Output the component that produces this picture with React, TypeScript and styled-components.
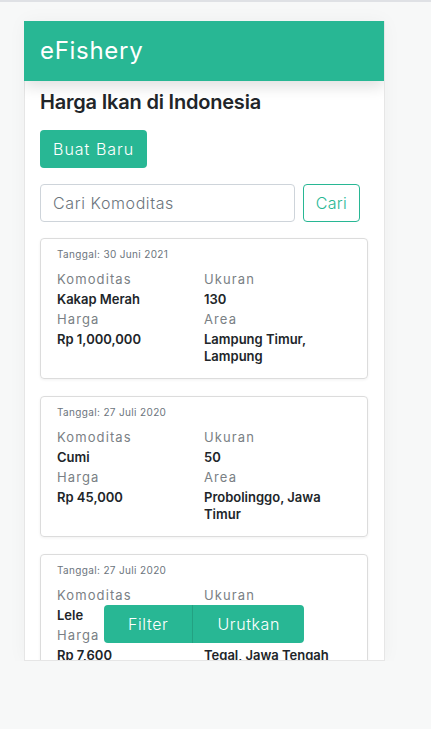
import React from "react";
import styled, { createGlobalStyle } from "styled-components";

const GREEN = "#28b794";

const Global = createGlobalStyle`
  * { box-sizing: border-box; }
  body {
    margin: 0;
    background: #f7f8f8;
    font-family: "Inter", "Open Sans", sans-serif;
    color: #212529;
  }
`;

const TopStrip = styled.div`
  height: 2px;
  background: #dfe1e5;
`;

const Page = styled.div`
  padding: 19px 24px 0;
`;

const Shell = styled.div`
  position: relative;
  width: 361px;
  height: 640px;
  background: #fff;
  border-right: 1px solid #e6e6e6;
  border-bottom: 1px solid #e6e6e6;
  overflow: hidden;
  box-shadow: 0 0 18px rgba(0, 0, 0, 0.04);
`;

const Header = styled.header`
  height: 60px;
  background: ${GREEN};
  display: flex;
  align-items: center;
  padding: 0 16px;
  box-shadow: 0 6px 14px rgba(0, 0, 0, 0.12);
  position: relative;
  z-index: 1;
`;

const Brand = styled.h1`
  margin: 0;
  font-size: 24px;
  font-weight: 400;
  letter-spacing: 0.7px;
  color: #fff;
  line-height: 1;
`;

const Content = styled.main`
  padding: 9px 16px 0 15px;
  display: flex;
  flex-direction: column;
  gap: 16px;
  border-left: 1px solid #e6e6e6;
`;

const Title = styled.h2`
  margin: 0;
  font-size: 20px;
  line-height: 24px;
  font-weight: 600;
  letter-spacing: -0.2px;
  color: #212529;
`;

const PrimaryButton = styled.button`
  align-self: flex-start;
  height: 38px;
  padding: 0 13px;
  border: none;
  border-radius: 4px;
  background: ${GREEN};
  color: #fff;
  font-family: inherit;
  font-size: 16px;
  font-weight: 300;
  letter-spacing: 1px;
`;

const SearchRow = styled.form`
  display: flex;
  gap: 8px;
  padding-right: 8px;
`;

const SearchInput = styled.input`
  flex: 1;
  min-width: 0;
  height: 38px;
  padding: 0 12px;
  border: 1px solid #ced4da;
  border-radius: 4px;
  font-family: inherit;
  font-size: 16px;
  font-weight: 300;
  letter-spacing: 0.6px;
  color: #495057;
  &::placeholder { color: #6c757d; }
`;

const OutlineButton = styled.button`
  height: 38px;
  padding: 0 12px;
  background: #fff;
  border: 1px solid ${GREEN};
  border-radius: 4px;
  color: ${GREEN};
  font-family: inherit;
  font-size: 16px;
  font-weight: 300;
  letter-spacing: 0.3px;
`;

const CardList = styled.section`
  display: flex;
  flex-direction: column;
  gap: 17px;
`;

const Card = styled.article`
  border: 1px solid #dcdcdc;
  border-radius: 4px;
  padding: 8px 16px 12px;
  box-shadow: 0 1px 3px rgba(0, 0, 0, 0.06);
`;

const DateLine = styled.div`
  font-size: 10px;
  line-height: 15px;
  color: #6c757d;
  letter-spacing: 0.35px;
  margin-bottom: 7px;
`;

const Grid = styled.div`
  display: grid;
  grid-template-columns: 1fr 1fr;
`;

const Field = styled.div`
  display: flex;
  flex-direction: column;
`;

const Label = styled.span`
  font-size: 13px;
  line-height: 20px;
  color: #7a7f85;
  letter-spacing: 1.1px;
`;

const Value = styled.span`
  font-size: 13px;
  line-height: 17px;
  padding: 2px 0 1px;
  font-weight: 600;
  color: #212529;
`;

const FloatGroup = styled.div`
  position: absolute;
  left: 50%;
  bottom: 17px;
  transform: translateX(-50%);
  display: flex;
  border-radius: 4px;
  overflow: hidden;
  z-index: 2;
`;

const GroupButton = styled.button<{ $first?: boolean }>`
  height: 38px;
  padding: 0 24px;
  border: none;
  border-left: ${(p) => (p.$first ? "none" : "1px solid rgba(0,0,0,0.12)")};
  background: ${GREEN};
  color: #fff;
  font-family: inherit;
  font-size: 16px;
  font-weight: 300;
  letter-spacing: 0.6px;
`;

type Item = {
  date: string;
  komoditas: string;
  ukuran: string;
  harga: string;
  area: string;
};

const items: Item[] = [
  { date: "30 Juni 2021", komoditas: "Kakap Merah", ukuran: "130", harga: "Rp 1,000,000", area: "Lampung Timur, Lampung" },
  { date: "27 Juli 2020", komoditas: "Cumi", ukuran: "50", harga: "Rp 45,000", area: "Probolinggo, Jawa Timur" },
  { date: "27 Juli 2020", komoditas: "Lele", ukuran: "200", harga: "Rp 7,600", area: "Tegal, Jawa Tengah" },
];

export default function App() {
  return (
    <>
      <Global />
      <TopStrip />
      <Page>
        <Shell>
          <Header>
            <Brand>eFishery</Brand>
          </Header>
          <Content>
            <Title>Harga Ikan di Indonesia</Title>
            <PrimaryButton>Buat Baru</PrimaryButton>
            <SearchRow onSubmit={(e) => e.preventDefault()}>
              <SearchInput placeholder="Cari Komoditas" />
              <OutlineButton type="submit">Cari</OutlineButton>
            </SearchRow>
            <CardList>
              {items.map((it, i) => (
                <Card key={i}>
                  <DateLine>Tanggal: {it.date}</DateLine>
                  <Grid>
                    <Field>
                      <Label>Komoditas</Label>
                      <Value>{it.komoditas}</Value>
                    </Field>
                    <Field>
                      <Label>Ukuran</Label>
                      <Value>{it.ukuran}</Value>
                    </Field>
                    <Field>
                      <Label>Harga</Label>
                      <Value>{it.harga}</Value>
                    </Field>
                    <Field>
                      <Label>Area</Label>
                      <Value>{it.area}</Value>
                    </Field>
                  </Grid>
                </Card>
              ))}
            </CardList>
          </Content>
          <FloatGroup>
            <GroupButton $first>Filter</GroupButton>
            <GroupButton>Urutkan</GroupButton>
          </FloatGroup>
        </Shell>
      </Page>
    </>
  );
}
